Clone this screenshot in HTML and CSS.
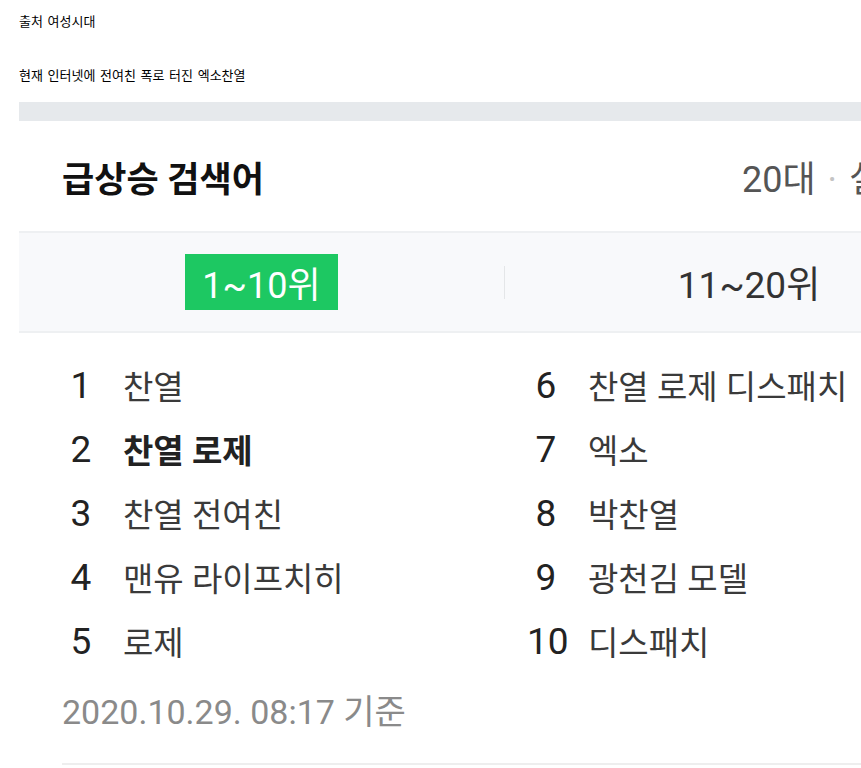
FILE: index.html
```html
<!DOCTYPE html>
<html lang="ko">
<head>
<meta charset="utf-8">
<title>급상승 검색어</title>
<link rel="stylesheet" href="styles.css">
</head>
<body>
<div class="page">
  <p class="line">출처 여성시대</p>
  <p class="line second">현재 인터넷에 전여친 폭로 터진 엑소찬열</p>
  <div class="shot">
    <div class="band"></div>
    <div class="head">
      <h2 class="title">급상승 검색어</h2>
      <div class="filter">20대<span class="dot">·</span>실시간</div>
    </div>
    <div class="tabs">
      <div class="tab"><span class="tab-on">1~10위</span></div>
      <div class="divider"></div>
      <div class="tab"><span class="tab-off">11~20위</span></div>
    </div>
    <ol class="rank">
      <li class="item"><span class="num">1</span><span class="kw">찬열</span></li>
      <li class="item"><span class="num">2</span><span class="kw strong">찬열 로제</span></li>
      <li class="item"><span class="num">3</span><span class="kw">찬열 전여친</span></li>
      <li class="item"><span class="num">4</span><span class="kw">맨유 라이프치히</span></li>
      <li class="item"><span class="num">5</span><span class="kw">로제</span></li>
      <li class="item"><span class="num">6</span><span class="kw">찬열 로제 디스패치</span></li>
      <li class="item"><span class="num">7</span><span class="kw">엑소</span></li>
      <li class="item"><span class="num">8</span><span class="kw">박찬열</span></li>
      <li class="item"><span class="num">9</span><span class="kw">광천김 모델</span></li>
      <li class="item"><span class="num">10</span><span class="kw">디스패치</span></li>
    </ol>
    <div class="date">2020.10.29. 08:17 기준</div>
  </div>
</div>
</body>
</html>
```
FILE: styles.css
```css
html, body {
  margin: 0;
  padding: 0;
  overflow: hidden;
  background: #fff;
}
.page {
  padding: 12px 0 0 19px;
  overflow: hidden;
  font-family: "Noto Sans CJK KR", sans-serif;
}
.line {
  margin: 0;
  font-size: 13px;
  line-height: 18px;
  color: #000;
  word-spacing: 1px;
}
.second {
  margin-top: 36px;
}
.shot {
  width: 970px;
  margin-top: 18px;
  font-family: Roboto, "Noto Sans CJK KR", sans-serif;
  background: #fff;
}
.band {
  height: 19px;
  background: #e6e9ec;
}
.head {
  height: 110px;
  display: grid;
  grid-template-columns: 680px auto;
  align-items: center;
  padding-left: 43px;
  border-bottom: 2px solid #eef0f2;
}
.title {
  margin: 0;
  font-size: 35px;
  font-weight: 700;
  color: #111;
}
.filter {
  font-size: 36px;
  color: #555;
  white-space: nowrap;
}
.dot {
  color: #c4c4c4;
  margin: 0 12px;
}
.tabs {
  height: 98px;
  background: #f8f9fb;
  border-bottom: 2px solid #eef0f2;
  display: grid;
  grid-template-columns: 485px 1px 1fr;
  align-items: center;
}
.tab {
  display: flex;
  justify-content: center;
}
.divider {
  height: 33px;
  background: #e4e6e8;
}
.tab-on {
  width: 153px;
  height: 56px;
  background: #1dc862;
  color: #fff;
  font-size: 36px;
  display: flex;
  align-items: center;
  justify-content: center;
}
.tab-off {
  font-size: 37px;
  color: #333;
  margin-left: 4px;
}
.rank {
  list-style: none;
  margin: 0;
  padding: 20px 0 0 43px;
  display: grid;
  grid-template-columns: 465px 465px;
  grid-template-rows: repeat(5, 64px);
  grid-auto-flow: column;
}
.item {
  display: flex;
  align-items: center;
}
.num {
  width: 38px;
  text-align: center;
  font-size: 37px;
  color: #222;
}
.kw {
  margin-left: 23px;
  font-size: 33px;
  color: #3a3a3a;
}
.strong {
  font-weight: 700;
  color: #222;
}
.date {
  margin: 19px 0 0 43px;
  padding-bottom: 31px;
  line-height: 40px;
  font-size: 34px;
  color: #8a8a8a;
  border-bottom: 2px solid #eeeeee;
}
```
